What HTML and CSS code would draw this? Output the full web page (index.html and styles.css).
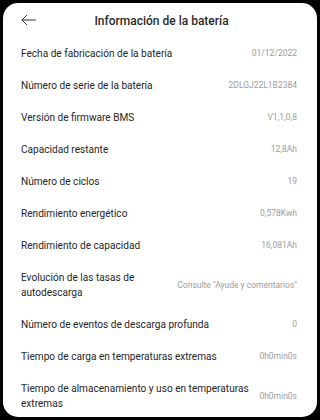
FILE: index.html
```html
<!DOCTYPE html>
<html lang="es">
<head>
<meta charset="utf-8">
<link rel="stylesheet" href="styles.css">
</head>
<body>
<div class="card">
  <header class="header">
    <svg class="back" width="15" height="12" viewBox="0 0 15 12">
      <path d="M14.5 6H1M5.8 1.2L1 6l4.8 4.8" fill="none" stroke="#333" stroke-width="1" stroke-linecap="round" stroke-linejoin="round"/>
    </svg>
    <h1 class="title">Información de la batería</h1>
  </header>
  <div class="list">
    <div class="row"><span class="label">Fecha de fabricación de la batería</span><span class="value">01/12/2022</span></div>
    <div class="row"><span class="label">Número de serie de la batería</span><span class="value">2DLGJ22L1B2384</span></div>
    <div class="row"><span class="label">Versión de firmware BMS</span><span class="value">V1,1,0,8</span></div>
    <div class="row"><span class="label">Capacidad restante</span><span class="value">12,8Ah</span></div>
    <div class="row"><span class="label">Número de ciclos</span><span class="value">19</span></div>
    <div class="row"><span class="label">Rendimiento energético</span><span class="value">0,578Kwh</span></div>
    <div class="row"><span class="label">Rendimiento de capacidad</span><span class="value">16,081Ah</span></div>
    <div class="row"><span class="label">Evolución de las tasas de autodescarga</span><span class="value">Consulte "Ayude y comentarios"</span></div>
    <div class="row"><span class="label">Número de eventos de descarga profunda</span><span class="value">0</span></div>
    <div class="row"><span class="label">Tiempo de carga en temperaturas extremas</span><span class="value">0h0min0s</span></div>
    <div class="row"><span class="label">Tiempo de almacenamiento y uso en temperaturas extremas</span><span class="value">0h0min0s</span></div>
  </div>
</div>
</body>
</html>
```
FILE: styles.css
```css
html, body {
  margin: 0;
  padding: 0;
  background: #000;
}
body {
  width: 320px;
  height: 420px;
  padding: 3px;
  box-sizing: border-box;
  font-family: Roboto, "Noto Sans", sans-serif;
}
.card {
  width: 314px;
  height: 414px;
  background: #fff;
  border-radius: 15px;
  overflow: hidden;
  box-sizing: border-box;
  padding: 0 20px 0 18px;
}
.header {
  position: relative;
  height: 34px;
  display: flex;
  align-items: center;
  justify-content: center;
}
.back {
  position: absolute;
  left: 0;
  top: 11px;
}
.title {
  margin: 0;
  padding: 1px 0 0 5px;
  font-size: 12px;
  font-weight: 500;
  color: #2a2a2a;
}
.row {
  display: flex;
  align-items: center;
  justify-content: space-between;
  gap: 4px;
  padding: 8.5px 0;
}
.label {
  font-size: 10.1px;
  line-height: 15px;
  color: #262626;
}
.value {
  flex-shrink: 0;
  font-size: 8.5px;
  line-height: 12px;
  color: #9c9c9c;
  text-align: right;
}
```
